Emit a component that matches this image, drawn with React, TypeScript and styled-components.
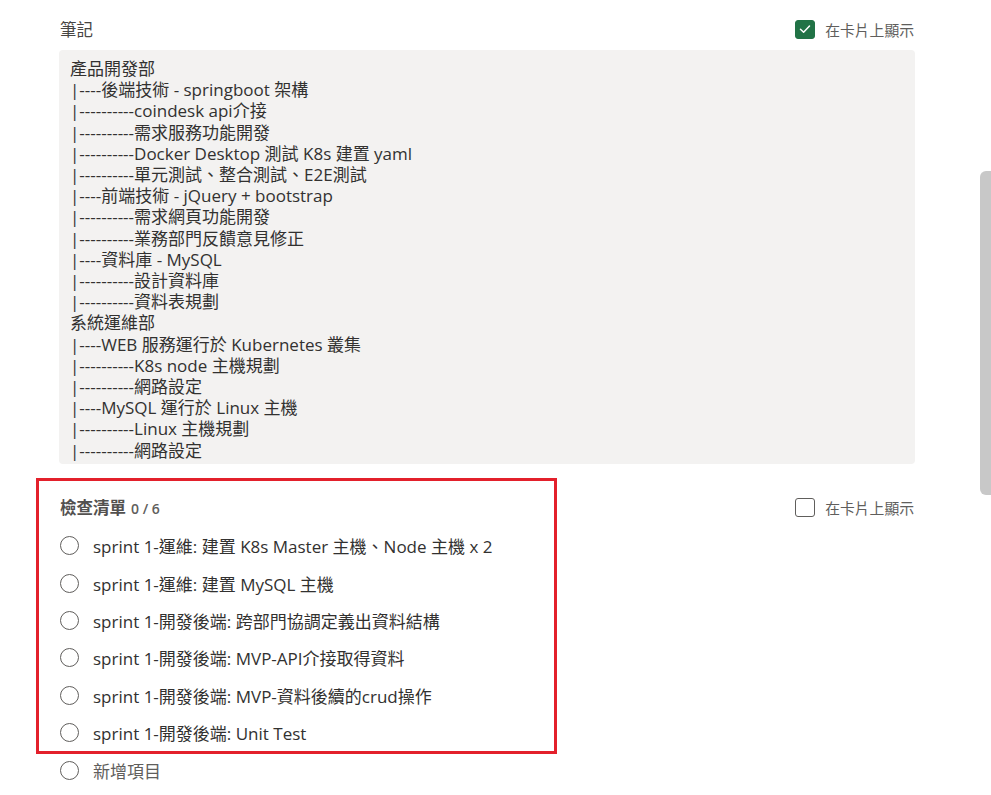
import React from "react";
import styled, { createGlobalStyle } from "styled-components";

const Global = createGlobalStyle`
  html, body { margin: 0; padding: 0; background: #ffffff; }
  body {
    font-family: "Segoe UI", "Open Sans", "Noto Sans CJK TC", sans-serif;
    color: #323130;
    overflow: hidden;
  }
`;

const Page = styled.div`
  position: relative;
  width: 991px;
  height: 795px;
  overflow: hidden;
  padding: 0 76px 0 60px;
  box-sizing: border-box;
`;

const Section = styled.section<{ $top: number }>`
  display: flex;
  flex-direction: column;
  padding-top: ${(p) => p.$top}px;
`;

const HeaderRow = styled.div`
  display: flex;
  align-items: center;
  justify-content: space-between;
  height: 22px;
`;

const Label = styled.div`
  font-size: 16.5px;
  color: #484644;
  font-weight: 400;
  display: flex;
  align-items: baseline;
  gap: 5px;
`;

const BoldLabel = styled(Label)`
  font-weight: 600;
  font-size: 16.5px;
  color: #53514f;
`;

const Count = styled.span`
  font-size: 14px;
  font-weight: 600;
  color: #605e5c;
`;

const ShowOnCard = styled.label`
  display: flex;
  align-items: center;
  gap: 10px;
  font-size: 14.8px;
  color: #605e5c;
  margin-right: 1px;
`;

const Box = styled.span<{ $checked?: boolean }>`
  width: 20px;
  height: 19px;
  box-sizing: border-box;
  border-radius: 3px;
  display: inline-flex;
  align-items: center;
  justify-content: center;
  background: ${(p) => (p.$checked ? "#217346" : "#ffffff")};
  border: 1px solid ${(p) => (p.$checked ? "#217346" : "#605e5c")};
`;

const Notes = styled.div`
  margin-top: 10px;
  margin-left: -1px;
  height: 414px;
  overflow: hidden;
  background: #f3f2f1;
  border-radius: 4px;
  padding: 8px 11px 0 11px;
  box-sizing: border-box;
  font-size: 17px;
  line-height: 21.2px;
  color: #323130;
  white-space: pre;
`;

const List = styled.div`
  display: flex;
  flex-direction: column;
  margin-top: 9px;
`;

const Item = styled.div<{ $muted?: boolean }>`
  display: flex;
  align-items: center;
  gap: 14px;
  height: 37.4px;
  font-size: 17px;
  color: ${(p) => (p.$muted ? "#605e5c" : "#323130")};
`;

const Radio = styled.span`
  width: 19px;
  height: 19px;
  box-sizing: border-box;
  border-radius: 50%;
  border: 1px solid #605e5c;
  flex: none;
`;

const Highlight = styled.div`
  position: absolute;
  left: 36px;
  top: 478px;
  width: 521px;
  height: 276px;
  box-sizing: border-box;
  border: 3.5px solid #e3202b;
  pointer-events: none;
`;

const ScrollThumb = styled.div`
  position: absolute;
  right: 0;
  top: 171px;
  width: 11px;
  height: 324px;
  background: #c8c8c8;
  border-radius: 6px 0 0 6px;
`;

const Check = () => (
  <svg width="14" height="14" viewBox="0 0 14 14">
    <path d="M2.5 7.3 L5.6 10.2 L11.5 4" fill="none" stroke="#fff" strokeWidth="1.5" strokeLinecap="round" strokeLinejoin="round" />
  </svg>
);

const noteLines = [
  "產品開發部",
  "|----後端技術 - springboot 架構",
  "|----------coindesk api介接",
  "|----------需求服務功能開發",
  "|----------Docker Desktop 測試 K8s 建置 yaml",
  "|----------單元測試、整合測試、E2E測試",
  "|----前端技術 - jQuery + bootstrap",
  "|----------需求網頁功能開發",
  "|----------業務部門反饋意見修正",
  "|----資料庫 - MySQL",
  "|----------設計資料庫",
  "|----------資料表規劃",
  "系統運維部",
  "|----WEB 服務運行於 Kubernetes 叢集",
  "|----------K8s node 主機規劃",
  "|----------網路設定",
  "|----MySQL 運行於 Linux 主機",
  "|----------Linux 主機規劃",
  "|----------網路設定",
];

const items = [
  "sprint 1-運維: 建置 K8s Master 主機、Node 主機 x 2",
  "sprint 1-運維: 建置 MySQL 主機",
  "sprint 1-開發後端: 跨部門協調定義出資料結構",
  "sprint 1-開發後端: MVP-API介接取得資料",
  "sprint 1-開發後端: MVP-資料後續的crud操作",
  "sprint 1-開發後端: Unit Test",
];

export default function App() {
  return (
    <>
      <Global />
      <Page>
        <Section $top={18}>
          <HeaderRow>
            <Label>筆記</Label>
            <ShowOnCard>
              <Box $checked>
                <Check />
              </Box>
              在卡片上顯示
            </ShowOnCard>
          </HeaderRow>
          <Notes>{noteLines.join("\n")}</Notes>
        </Section>
        <Section $top={32}>
          <HeaderRow>
            <BoldLabel>
              檢查清單<Count>0 / 6</Count>
            </BoldLabel>
            <ShowOnCard>
              <Box />
              在卡片上顯示
            </ShowOnCard>
          </HeaderRow>
          <List>
            {items.map((t) => (
              <Item key={t}>
                <Radio />
                {t}
              </Item>
            ))}
            <Item $muted>
              <Radio />
              新增項目
            </Item>
          </List>
        </Section>
        <Highlight />
        <ScrollThumb />
      </Page>
    </>
  );
}
